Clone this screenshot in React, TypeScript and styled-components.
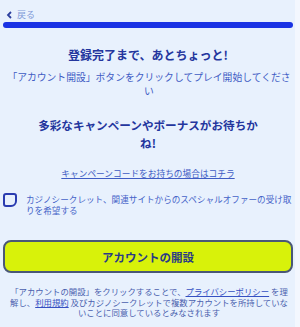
import React from "react";
import styled, { createGlobalStyle } from "styled-components";

const GlobalStyle = createGlobalStyle`
  html, body {
    margin: 0;
    padding: 0;
    background-color: #f3f7fe;
  }
  body {
    font-family: "Noto Sans CJK JP", "Noto Sans", sans-serif;
  }
`;

const ChevronLeft = () => (
  <svg width="7" height="8" viewBox="0 0 7 8" fill="none">
    <path d="M5 1 L2 4 L5 7" stroke="#2c3f9e" strokeWidth="1.8" />
  </svg>
);

const App = () => {
  return (
    <>
      <GlobalStyle />
      <PageSC>
        <BackSC href="#">
          <ChevronLeft />
          <span>戻る</span>
        </BackSC>
        <ProgressSC />

        <TitleSC>登録完了まで、あとちょっと!</TitleSC>
        <LeadSC>
          「アカウント開設」ボタンをクリックしてプレイ開始してください
        </LeadSC>

        <HeadingSC>多彩なキャンペーンやボーナスがお待ちかね!</HeadingSC>

        <CodeLinkSC href="#">キャンペーンコードをお持ちの場合はコチラ</CodeLinkSC>

        <CheckRowSC>
          <CheckBoxSC />
          <CheckTextSC>
            カジノシークレット、関連サイトからのスペシャルオファーの受け取りを希望する
          </CheckTextSC>
        </CheckRowSC>

        <ButtonSC type="button">アカウントの開設</ButtonSC>

        <TermsSC>
          「アカウントの開設」をクリックすることで、
          <TermsLinkSC href="#">プライバシーポリシー</TermsLinkSC> を理解し、
          <TermsLinkSC href="#">利用規約</TermsLinkSC>{" "}
          及びカジノシークレットで複数アカウントを所持していないことに同意しているとみなされます
        </TermsSC>
      </PageSC>
    </>
  );
};

const PageSC = styled("div")`
  width: 295px;
  min-height: 327px;
  box-sizing: border-box;
  padding: 0 2px 0 3px;

  display: flex;
  flex-direction: column;

  background-color: #e8f1fd;
`;

const BackSC = styled("a")`
  margin-top: 9px;
  height: 12px;
  padding-left: 3px;

  display: flex;
  align-items: center;
  gap: 4px;

  color: #7f9ad8;
  font-size: 9px;
  line-height: 12px;
  text-decoration: none;
`;

const ProgressSC = styled("div")`
  margin-top: 1px;
  height: 6px;
  border-radius: 3px;
  background-color: #1a33e4;
`;

const TitleSC = styled("h2")`
  margin: 18px 0 0;

  color: #24369e;
  font-size: 12px;
  font-weight: 700;
  line-height: 18px;
  text-align: center;
`;

const LeadSC = styled("p")`
  margin: 6px 0 0;
  padding: 0 2px 0 4px;

  color: #3f5cc4;
  font-size: 9.8px;
  line-height: 14px;
  text-align: center;
`;

const HeadingSC = styled("h3")`
  width: 230px;
  margin: 18px auto 0;

  color: #24369e;
  font-size: 11.6px;
  font-weight: 700;
  line-height: 18px;
  text-align: center;
`;

const CodeLinkSC = styled("a")`
  margin-top: 16px;
  align-self: center;

  color: #3f5cc4;
  font-size: 8.7px;
  line-height: 12px;
  text-decoration: underline;
`;

const CheckRowSC = styled("label")`
  margin-top: 13px;

  display: flex;
  align-items: flex-start;
  gap: 9px;
`;

const CheckBoxSC = styled("span")`
  flex-shrink: 0;
  width: 14px;
  height: 14px;
  box-sizing: border-box;

  border: 2px solid #2a3cb0;
  border-radius: 3px 3px 6px 3px;
  background-color: #e8f1fd;
`;

const CheckTextSC = styled("span")`
  padding-top: 1px;

  color: #4563c8;
  font-size: 8.6px;
  line-height: 11px;
`;

const ButtonSC = styled("button")`
  margin-top: 24px;
  height: 33px;
  box-sizing: border-box;

  border: 2px solid #4a5876;
  border-radius: 8px;
  background-color: #d8f20a;

  color: #2a3a86;
  font-family: "Noto Sans CJK JP", "Noto Sans", sans-serif;
  font-size: 11.5px;
  font-weight: 700;
  cursor: pointer;
`;

const TermsSC = styled("p")`
  margin: 13px 0 0;
  padding: 0 2px 0 4px;

  color: #4a5fae;
  font-size: 8.4px;
  line-height: 10.5px;
  text-align: center;
`;

const TermsLinkSC = styled("a")`
  color: #3550c2;
  text-decoration: underline;
`;

export default App;
